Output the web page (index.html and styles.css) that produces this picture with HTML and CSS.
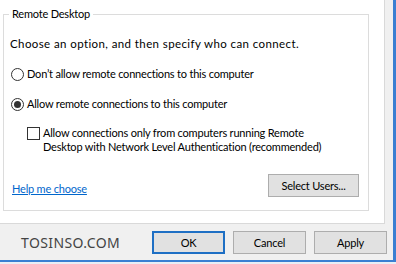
FILE: index.html
```html
<!DOCTYPE html>
<html lang="en">
<head>
    <meta charset="UTF-8">
    <meta name="viewport" content="width=device-width, initial-scale=1.0">
    <title>System Properties - Remote</title>
    <link rel="stylesheet" href="styles.css">
</head>
<body>
    <div class="dialog">
        <div class="tab-page">
            <fieldset class="group">
                <legend>Remote Desktop</legend>
                <p class="intro">Choose an option, and then specify who can connect.</p>

                <label class="option">
                    <span class="radio"></span>
                    Don’t allow remote connections to this computer
                </label>
                <label class="option">
                    <span class="radio checked"></span>
                    Allow remote connections to this computer
                </label>
                <label class="option sub">
                    <span class="check"></span>
                    <span>Allow connections only from computers running Remote<br>Desktop with Network Level Authentication (recommended)</span>
                </label>

                <div class="group-foot">
                    <a href="#" class="help-link">Help me choose</a>
                    <button class="btn select-btn">Select Users...</button>
                </div>
            </fieldset>
        </div>

        <div class="footer">
            <span class="watermark">TOSINSO.COM</span>
            <div class="actions">
                <button class="btn default">OK</button>
                <button class="btn">Cancel</button>
                <button class="btn">Apply</button>
            </div>
        </div>
    </div>
</body>
</html>
```

FILE: styles.css
```css
* {
    margin: 0;
    padding: 0;
    box-sizing: border-box;
}

body {
    font-family: Lato, "Noto Sans", sans-serif;
    font-size: 11px;
    letter-spacing: -0.2px;
    color: #000;
    background: #e9eef5;
    width: 396px;
    height: 264px;
    overflow: hidden;
}

.dialog {
    width: 396px;
    height: 262px;
    background: #f0f0f0;
    border-right: 3px solid #3a7fd2;
    border-bottom: 2px solid #3a7fd2;
    display: flex;
    flex-direction: column;
}

.tab-page {
    width: 385px;
    height: 224px;
    background: #fff;
    border-right: 1px solid #d9d9d9;
    border-bottom: 1px solid #d9d9d9;
    padding-left: 3px;
}

.group {
    width: 366px;
    margin-top: 6px;
    border: 1px solid #dcdcdc;
    padding: 0 9px 13px 6px;
}

.group legend {
    line-height: 16px;
    padding: 0 3px;
    margin-left: -1px;
}

.intro {
    font-size: 11.5px;
    letter-spacing: 0.4px;
    line-height: 16px;
    margin-top: 14px;
}

.option {
    display: flex;
    align-items: center;
    line-height: 16px;
    margin-top: 14px;
    white-space: nowrap;
}

.radio {
    width: 13px;
    height: 13px;
    border: 1px solid #333;
    border-radius: 50%;
    margin: 0 3px 0 1px;
    display: flex;
    align-items: center;
    justify-content: center;
    flex-shrink: 0;
}

.radio.checked::after {
    content: "";
    width: 7px;
    height: 7px;
    border-radius: 50%;
    background: #333;
}

.option.sub {
    align-items: flex-start;
    line-height: 14px;
    padding-left: 17px;
}

.check {
    width: 13px;
    height: 13px;
    border: 1px solid #333;
    margin: 1px 3px 0 0;
    flex-shrink: 0;
}

.group-foot {
    display: flex;
    align-items: center;
    justify-content: space-between;
    margin-top: 20px;
}

.help-link {
    color: #0066cc;
    text-decoration: underline;
    margin: 5px 0 0 2px;
}

.btn {
    font-family: inherit;
    font-size: 11px;
    letter-spacing: -0.2px;
    color: #000;
    background: #e1e1e1;
    border: 1px solid #adadad;
    height: 23px;
}

.select-btn {
    width: 91px;
}

.footer {
    flex: 1;
    display: flex;
    align-items: center;
    padding-left: 21px;
}

.watermark {
    width: 131px;
    font-family: "Noto Sans", sans-serif;
    font-size: 14px;
    color: #444;
    letter-spacing: 0.4px;
}

.actions {
    display: flex;
    gap: 8px;
}

.actions .btn {
    width: 73px;
}

.btn.default {
    border: 2px solid #1e6fc4;
}
```
